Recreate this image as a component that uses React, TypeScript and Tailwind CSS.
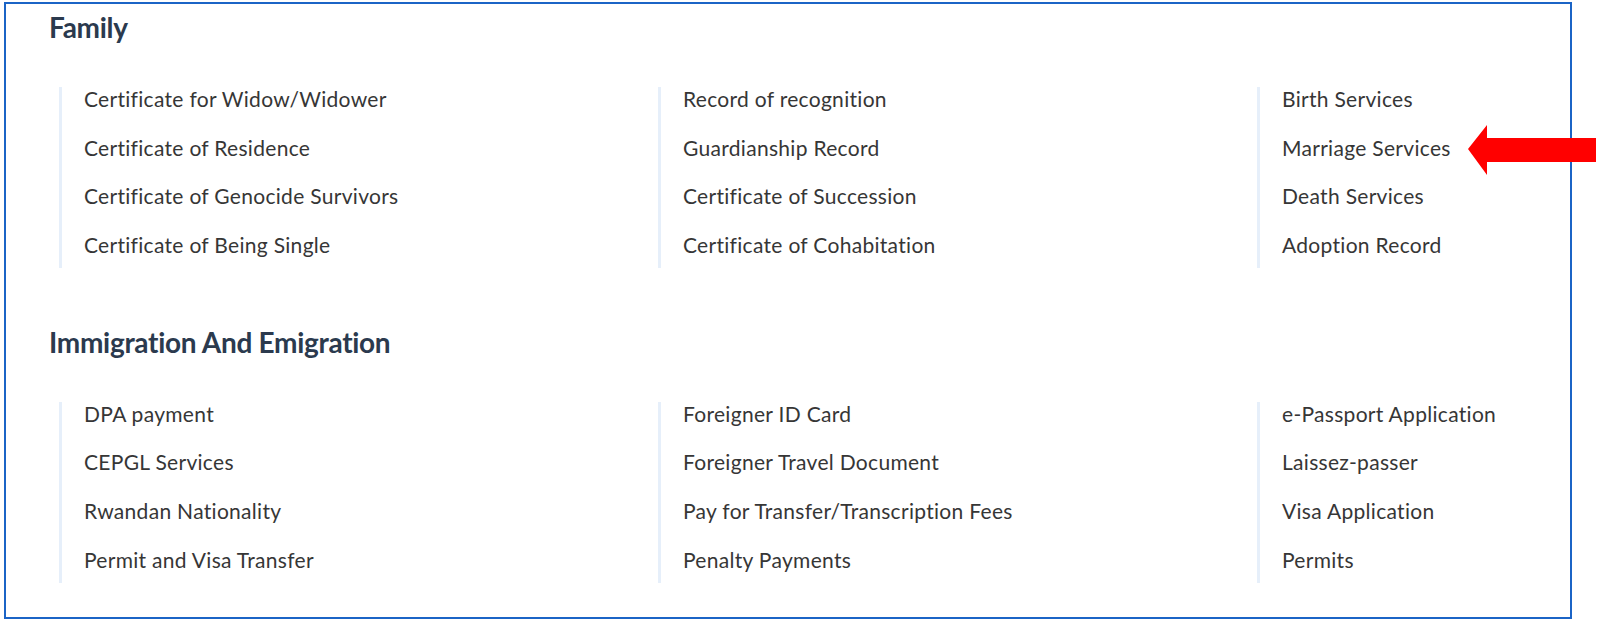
import React from 'react';

const sections = [
    {
        title: 'Family',
        columns: [
            ['Certificate for Widow/Widower', 'Certificate of Residence', 'Certificate of Genocide Survivors', 'Certificate of Being Single'],
            ['Record of recognition', 'Guardianship Record', 'Certificate of Succession', 'Certificate of Cohabitation'],
            ['Birth Services', 'Marriage Services', 'Death Services', 'Adoption Record'],
        ],
    },
    {
        title: 'Immigration And Emigration',
        columns: [
            ['DPA payment', 'CEPGL Services', 'Rwandan Nationality', 'Permit and Visa Transfer'],
            ['Foreigner ID Card', 'Foreigner Travel Document', 'Pay for Transfer/Transcription Fees', 'Penalty Payments'],
            ['e-Passport Application', 'Laissez-passer', 'Visa Application', 'Permits'],
        ],
    },
];

// red annotation arrow pointing at "Marriage Services"
function Arrow() {
    return (
        <svg className="absolute left-[1466px] top-[124px]" width="134" height="52" viewBox="0 0 134 52">
            <polygon points="2,25 21,1 21,14 130,14 130,38 21,38 21,51" fill="#ff0000" />
        </svg>
    );
}

export default function App() {
    return (
        <div className="relative w-[1600px] h-[622px] bg-white pt-[2px] pl-[4px]" style={{ fontFamily: 'Lato, "Open Sans", sans-serif' }}>
            <div className="w-[1568px] h-[617px] border-2 border-[#1b64c6] pl-[43px]">
                {sections.map((section, i) => (
                    <div key={section.title} className={i === 0 ? 'pt-[7px]' : 'pt-[58px]'}>
                        <h2 className="text-[28px] leading-8 font-bold text-[#2b3a4e] tracking-[-0.3px]">{section.title}</h2>
                        <div className="grid grid-cols-[599px_599px_1fr] pl-[10px] mt-[44px]">
                            {section.columns.map((col, j) => (
                                <ul key={j} className="flex flex-col gap-[24.6px] border-l-[3px] border-[#e6effa] pl-[22px] pb-[11px]">
                                    {col.map((item) => (
                                        <li key={item} className="text-[21px] leading-6 tracking-[0.3px] text-[#363636]">
                                            {item}
                                        </li>
                                    ))}
                                </ul>
                            ))}
                        </div>
                    </div>
                ))}
            </div>
            <Arrow />
        </div>
    );
}
